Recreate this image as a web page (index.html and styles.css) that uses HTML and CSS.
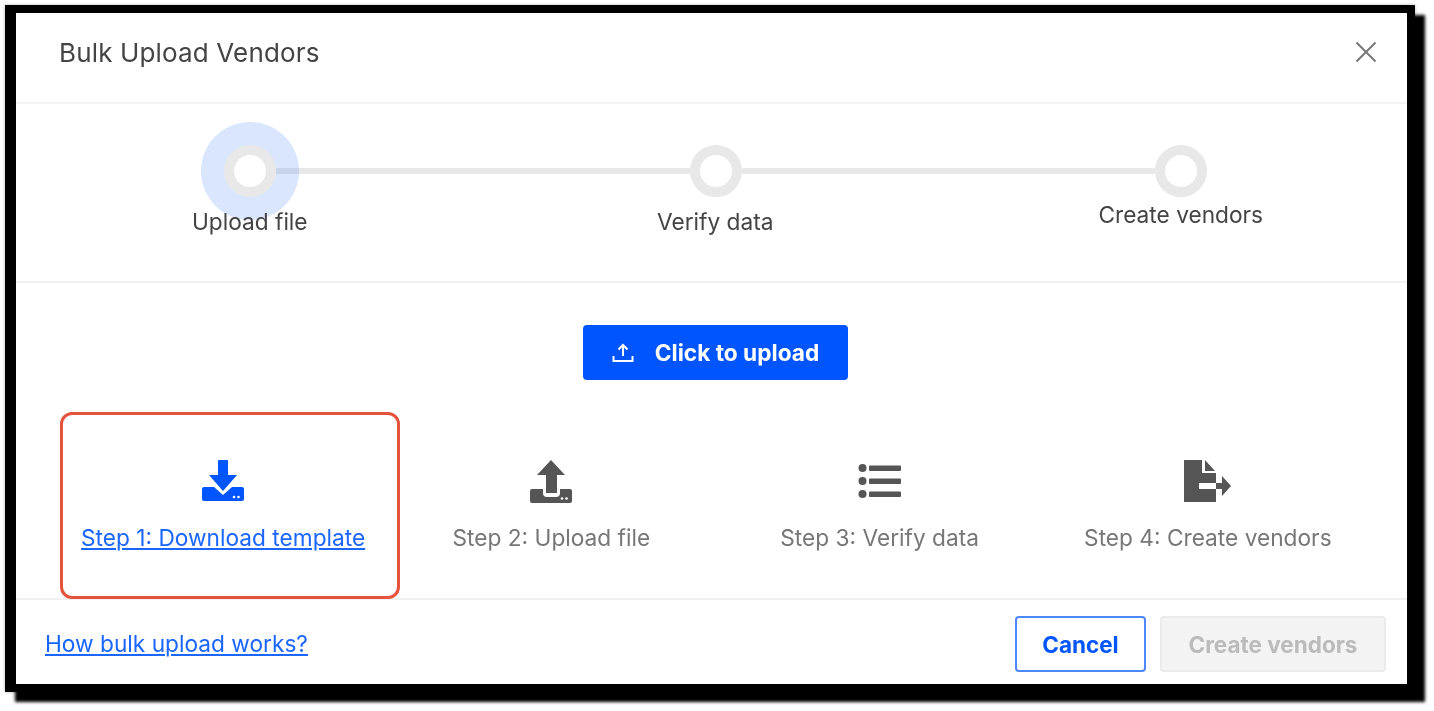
FILE: index.html
```html
<!DOCTYPE html>
<html lang="en">
<head>
    <meta charset="UTF-8">
    <meta name="viewport" content="width=device-width, initial-scale=1.0">
    <title>Bulk Upload Vendors</title>
    <link rel="stylesheet" href="styles.css">
</head>
<body>
    <div class="frame">
        <div class="modal">
            <div class="modal-header">
                <h1>Bulk Upload Vendors</h1>
                <svg class="close" width="22" height="22" viewBox="0 0 22 22"><path d="M1.5 1.5L20.5 20.5M20.5 1.5L1.5 20.5"/></svg>
            </div>

            <div class="stepper">
                <div class="track">
                    <span class="dot active"></span>
                    <span class="bar"></span>
                    <span class="dot"></span>
                    <span class="bar"></span>
                    <span class="dot"></span>
                </div>
                <div class="labels">
                    <span class="label">Upload file</span>
                    <span class="label">Verify data</span>
                    <span class="label label-last">Create vendors</span>
                </div>
            </div>

            <div class="modal-body">
                <button class="upload-btn">
                    <svg width="22" height="20" viewBox="0 0 22 20"><path d="M11 2V13M6.5 6.5L11 2L15.5 6.5M1.5 13V18H20.5V13" fill="none" stroke="#fff" stroke-width="2"/></svg>
                    Click to upload
                </button>

                <div class="steps">
                    <div class="step step-current">
                        <div class="highlight"></div>
                        <svg width="44" height="44" viewBox="0 0 44 44" fill="#0055ff">
                            <path d="M18 1H26Q27 1 27 2V16H36L22 32L8 16H17V2Q17 1 18 1Z"/>
                            <path d="M3 28H13L22 36L31 28H41Q43 28 43 30V40Q43 42 41 42H3Q1 42 1 40V30Q1 28 3 28Z"/>
                            <circle cx="33" cy="38" r="1.3" fill="#fff"/><circle cx="37.5" cy="38" r="1.3" fill="#fff"/>
                        </svg>
                        <a href="#">Step 1: Download template</a>
                    </div>
                    <div class="step">
                        <svg width="44" height="44" viewBox="0 0 44 44" fill="#555">
                            <path d="M22 1L36 16H28V34H17V16H8Z"/>
                            <path d="M3 30H14V34Q14 38 18 38H27Q31 38 31 34V30H41Q43 30 43 32V42Q43 44 41 44H3Q1 44 1 42V32Q1 30 3 30Z"/>
                            <circle cx="33" cy="39.5" r="1.3" fill="#fff"/><circle cx="37.5" cy="39.5" r="1.3" fill="#fff"/>
                        </svg>
                        <span>Step 2: Upload file</span>
                    </div>
                    <div class="step">
                        <svg width="44" height="44" viewBox="0 0 44 44" fill="#555">
                            <circle cx="4.5" cy="9" r="4"/><rect x="11" y="6.5" width="32" height="5.5" rx="1"/>
                            <circle cx="4.5" cy="22" r="4"/><rect x="11" y="19.5" width="32" height="5.5" rx="1"/>
                            <circle cx="4.5" cy="35" r="4"/><rect x="11" y="32.5" width="32" height="5.5" rx="1"/>
                        </svg>
                        <span>Step 3: Verify data</span>
                    </div>
                    <div class="step">
                        <svg width="48" height="44" viewBox="0 0 48 44" fill="#555">
                            <path d="M0 1H18V14H32V24H15V30H32V43H0Z"/>
                            <path d="M21 1L31 12H21Z"/>
                            <path d="M32 24H38V17L47 27L38 37V30H32Z"/>
                        </svg>
                        <span>Step 4: Create vendors</span>
                    </div>
                </div>
            </div>

            <div class="modal-footer">
                <a href="#">How bulk upload works?</a>
                <div class="actions">
                    <button class="btn-cancel">Cancel</button>
                    <button class="btn-create" disabled>Create vendors</button>
                </div>
            </div>
        </div>
    </div>
</body>
</html>
```

FILE: styles.css
```css
* {
    box-sizing: border-box;
}

body {
    font-family: Inter, Arial, sans-serif;
    margin: 0;
    height: 711px;
    padding: 5px 0 0 5px;
    background-color: #fff;
}

.frame {
    width: 1410px;
    height: 687px;
    border-style: solid;
    border-color: #000;
    border-width: 8px 8px 8px 11px;
    box-shadow: 10px 10px 3px #000, 0 0 3px rgba(0,0,0,0.3);
    background-color: #fff;
}

.modal {
    height: 671px;
    display: flex;
    flex-direction: column;
    color: #444;
    filter: blur(0.6px);
}

.modal-header {
    height: 91px;
    flex: none;
    padding: 0 30px 11px 43px;
    display: flex;
    align-items: center;
    justify-content: space-between;
    border-bottom: 2px solid #f3f3f3;
}

h1 {
    font-size: 26px;
    font-weight: 400;
    margin: 0;
    letter-spacing: 0.15px;
}

.close {
    stroke: #777;
    stroke-width: 2;
    fill: none;
}

.stepper {
    height: 179px;
    flex: none;
    padding-top: 41px;
    border-bottom: 2px solid #f1f1f1;
}

.track {
    display: flex;
    align-items: center;
    padding-left: 208px;
}

.dot {
    width: 52px;
    height: 52px;
    flex: none;
    border: 10px solid #e8e8e8;
    border-radius: 50%;
    background-color: #fff;
}

.dot.active {
    position: relative;
    z-index: 1;
    box-shadow: 0 0 0 23px rgba(80,140,245,0.22);
}

.bar {
    width: 413.5px;
    height: 6px;
    flex: none;
    background-color: #e8e8e8;
}

.labels {
    display: grid;
    grid-template-columns: repeat(3, 465.5px);
    padding-left: 1px;
    position: relative;
    z-index: 2;
}

.label {
    font-size: 22.7px;
    text-align: center;
    margin-top: 10px;
    line-height: 30px;
}

.label-last {
    margin-top: 3px;
}

.modal-body {
    flex: 1;
    padding-top: 42px;
    display: flex;
    flex-direction: column;
    align-items: center;
}

.upload-btn {
    width: 265px;
    height: 55px;
    flex: none;
    margin-left: 8px;
    border: 0;
    border-radius: 4px;
    background-color: #0055ff;
    color: #fff;
    font-family: inherit;
    font-size: 22.7px;
    font-weight: 700;
    display: flex;
    align-items: center;
    justify-content: center;
    gap: 21px;
}

.steps {
    width: 100%;
    margin-top: 79px;
    padding: 0 35px 0 43px;
    display: grid;
    grid-template-columns: repeat(4, 1fr);
}

.step {
    position: relative;
    display: flex;
    flex-direction: column;
    align-items: center;
    gap: 20px;
    font-size: 22.7px;
    color: #777;
    line-height: 30px;
}

.step a,
.modal-footer a {
    color: #1a66ff;
}

/* red annotation box around the first step */
.highlight {
    position: absolute;
    left: 1px;
    right: -13px;
    top: -47px;
    height: 187px;
    border: 3px solid #e5533d;
    border-radius: 12px;
}

.modal-footer {
    height: 86px;
    flex: none;
    padding: 16px 21px 0 29px;
    display: flex;
    justify-content: space-between;
    align-items: flex-start;
    border-top: 2px solid #f1f1f1;
    font-size: 22.7px;
}

.modal-footer a {
    margin-top: 14px;
}

.actions {
    display: flex;
    gap: 14px;
}

.actions button {
    height: 56px;
    border-radius: 4px;
    font-family: inherit;
    font-size: 22.5px;
    font-weight: 700;
}

.btn-cancel {
    width: 131px;
    background-color: #fff;
    border: 2px solid #4d88ff;
    color: #0055ff;
}

.btn-create {
    width: 226px;
    background-color: #f3f3f3;
    border: 2px solid #ebebeb;
    color: #bbb;
}
```
